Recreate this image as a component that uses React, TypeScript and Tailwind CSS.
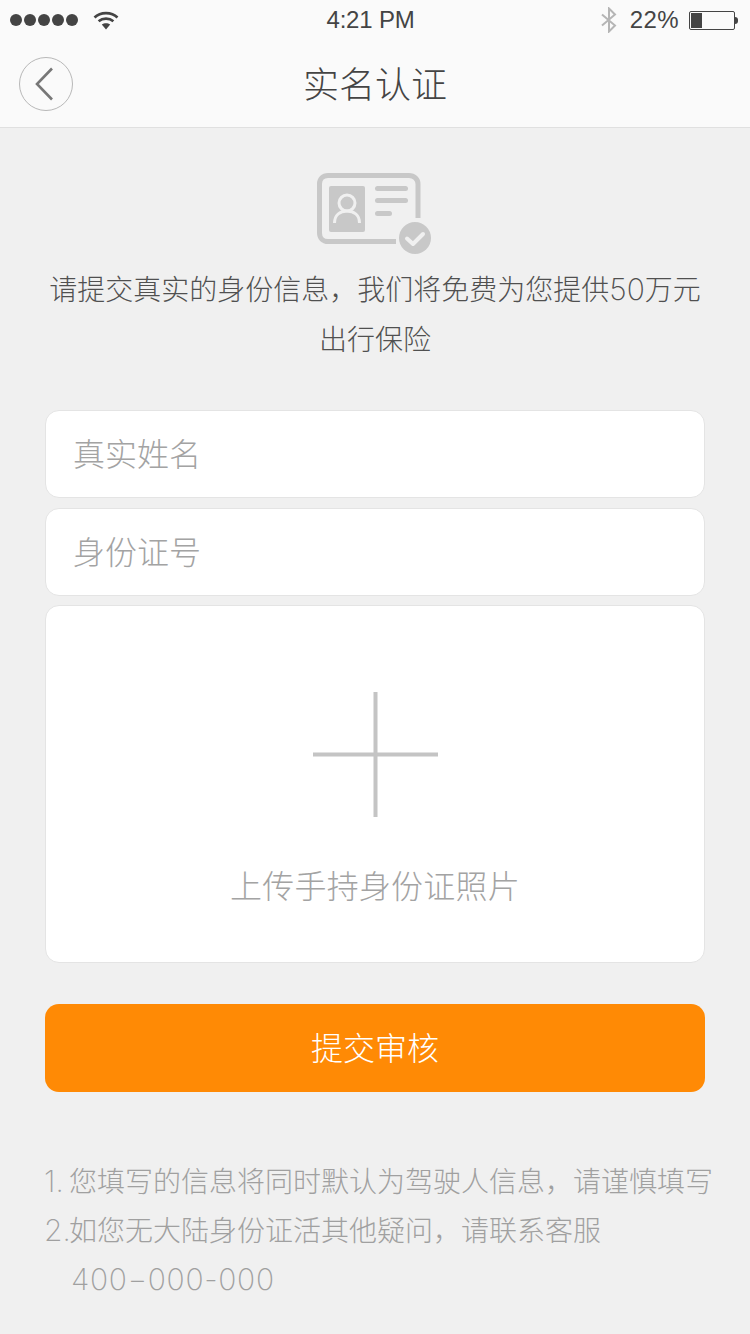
const cjk = "font-['Inter','Noto_Sans_CJK_SC',sans-serif] font-light";
const comma = "\uFF0C";

function StatusBar() {
  return (
    <div className="flex h-10 items-center justify-between pl-[10px] pr-[12px] font-['Liberation_Sans',sans-serif] text-[24px] text-[#444]">
      <div className="flex w-[197px] items-center">
        <div className="flex gap-[2px]">
          {[0, 1, 2, 3, 4].map((i) => (
            <span key={i} className="h-3 w-3 rounded-full bg-[#444]" />
          ))}
        </div>
        <svg className="mb-[1px] ml-[15px]" width="26" height="20" viewBox="0 0 26 20" fill="none" stroke="#444" strokeWidth="2.6">
          <path d="M1.5 7.5C7.5 1.6 18.5 1.6 24.5 7.5" />
          <path d="M5.6 11.3C9.8 7.7 16.2 7.7 20.4 11.3" />
          <path d="M13 19.5 8.8 14.6C11.2 12.8 14.8 12.8 17.2 14.6Z" fill="#444" stroke="none" />
        </svg>
      </div>
      <div className="tracking-[-0.2px]">4:21 PM</div>
      <div className="flex w-[204px] items-center justify-end">
        <svg width="18" height="26" viewBox="0 0 18 26" fill="none" stroke="#b5b5b5" strokeWidth="2">
          <path d="M2 7.5 15 18.5 9 24.5V1.5L15 7.500 2 18.5" />
        </svg>
        <span className="ml-[12px] tracking-[0.4px]">22%</span>
        <div className="ml-[10px] flex h-[19px] w-[46px] items-center rounded-[2px] border border-[#444] p-[1px]">
          <div className="h-full w-[11px] bg-[#444]" />
        </div>
        <div className="h-[7px] w-[3px] rounded-r-sm bg-[#444]" />
      </div>
    </div>
  );
}

function NavBar() {
  return (
    <div className="flex h-[88px] items-center border-b border-[#e0e0e0] pl-[19px]">
      <div className="flex h-[54px] w-[54px] shrink-0 items-center justify-center rounded-full border border-[#b8b8b8]">
        <svg width="20" height="34" viewBox="0 0 20 34" fill="none" stroke="#777" strokeWidth="2.6" className="mr-[5px]">
          <path d="M18 1.5 3 17l15 15.500" />
        </svg>
      </div>
      <div className={`${cjk} flex-1 pr-[73px] pt-[2px] text-center text-[36px] text-[#444]`}>实名认证</div>
    </div>
  );
}

function CardIcon() {
  return (
    <svg width="116" height="84" viewBox="0 0 116 84" fill="none">
      <path d="M79 69.500H11C6 69.500 2.500 66 2.500 61V12C2.500 7 6 3.500 11 3.500H92C97 3.500 101 7 101 12V46" stroke="#c8c8c8" strokeWidth="5" />
      <rect x="12" y="14" width="36" height="46" rx="2" fill="#c8c8c8" />
      <circle cx="30" cy="31" r="8" stroke="#f0f0f0" strokeWidth="3" />
      <path d="M17.500 51C17.500 43 23 39 30 39S42.500 43 42.500 51" stroke="#f0f0f0" strokeWidth="3" />
      <rect x="58" y="14" width="33" height="5" rx="2.500" fill="#c8c8c8" />
      <rect x="58" y="26" width="33" height="5" rx="2.500" fill="#c8c8c8" />
      <rect x="58" y="39" width="17" height="5" rx="2.500" fill="#c8c8c8" />
      <circle cx="98" cy="66" r="16" fill="#c8c8c8" />
      <path d="M90 66.500 96 72 106 62" stroke="#f0f0f0" strokeWidth="4" strokeLinecap="round" strokeLinejoin="round" />
    </svg>
  );
}

function Field({ label }: { label: string }) {
  return (
    <div className={`${cjk} flex h-[88px] items-center rounded-[14px] border border-[#e4e4e4] bg-white pl-[27px] pt-[2px] text-[32px] text-[#a3a3a3]`}>
      {label}
    </div>
  );
}

// digits in the picture are set wider than the CJK text around them
function Num({ children }: { children: string }) {
  return <span className="text-[30px] leading-none font-[250]">{children}</span>;
}

function NoteIndex({ children }: { children: string }) {
  return <span className="-ml-[1px] inline-block w-[25px] text-[30px] leading-none font-[250]">{children}</span>;
}

export default function App() {
  return (
    <div className="flex h-[1334px] w-[750px] flex-col overflow-hidden bg-[#f0f0f0]">
      <div className="bg-[#fafafa]">
        <StatusBar />
        <NavBar />
      </div>

      <div className="mt-[44px] flex justify-center">
        <CardIcon />
      </div>
      <div className={`${cjk} mt-[9px] whitespace-nowrap text-center text-[28px] leading-[50px] text-[#505050]`}>
        请提交真实的身份信息{comma}我们将免费为您提供<Num>50</Num>万元
        <br />
        出行保险
      </div>

      <div className="mt-[45px] flex flex-col px-[45px]">
        <Field label="真实姓名" />
        <div className="mt-[10px]">
          <Field label="身份证号" />
        </div>
        <div className="mt-[9px] flex h-[358px] flex-col items-center rounded-[14px] border border-[#e4e4e4] bg-white pt-[86px]">
          <svg width="125" height="125" viewBox="0 0 125 125">
            <rect x="60.500" width="4" height="125" fill="#c4c4c4" />
            <rect y="60.500" width="125" height="4" fill="#c4c4c4" />
          </svg>
          <div className={`${cjk} mt-[50px] text-[32px] leading-[40px] tracking-[0.2px] text-[#a3a3a3]`}>上传手持身份证照片</div>
        </div>
      </div>

      <div className="mt-[41px] px-[45px]">
        <div className={`${cjk} flex h-[88px] items-center justify-center rounded-[14px] bg-[#ff8a05] pt-[2px] text-[32px] text-white`}>
          提交审核
        </div>
      </div>

      <div className={`${cjk} mt-[66px] pl-[45px] text-[28px] leading-[49px] whitespace-nowrap text-[#a0a0a0]`}>
        <div><NoteIndex>1.</NoteIndex>您填写的信息将同时默认为驾驶人信息{comma}请谨慎填写</div>
        <div><NoteIndex>2.</NoteIndex>如您无大陆身份证活其他疑问{comma}请联系客服</div>
        <div className="pl-[26px] tracking-[0.7px]"><Num>400−000-000</Num></div>
      </div>
    </div>
  );
}
